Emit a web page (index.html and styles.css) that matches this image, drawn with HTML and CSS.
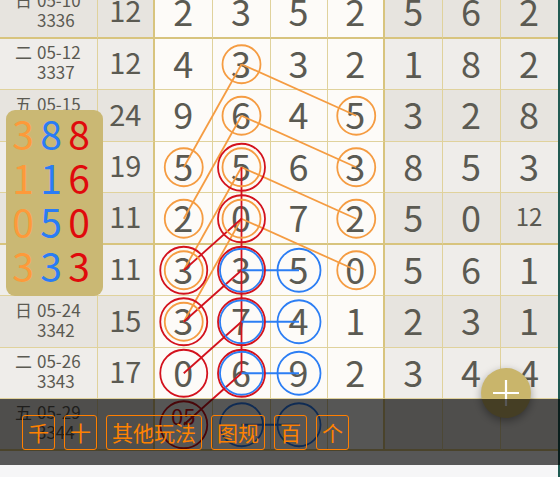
FILE: index.html
```html
<!DOCTYPE html>
<html lang="zh">
<head>
<meta charset="utf-8">
<link rel="stylesheet" href="styles.css">
</head>
<body>
<div class="screen">
  <div class="content">
    <div class="table">
      <div class="row dark thick">
        <div class="cell date"><span class="wd">日</span><span>05-10</span><span class="no">3336</span></div>
        <div class="cell sum">12</div>
        <div class="cell main">2</div><div class="cell main">3</div><div class="cell main">5</div><div class="cell main edge">2</div>
        <div class="cell side">5</div><div class="cell side">6</div><div class="cell side">2</div>
      </div>
      <div class="row light">
        <div class="cell date"><span class="wd">二</span><span>05-12</span><span class="no">3337</span></div>
        <div class="cell sum">12</div>
        <div class="cell main">4</div><div class="cell main">3</div><div class="cell main">3</div><div class="cell main edge">2</div>
        <div class="cell side">1</div><div class="cell side">8</div><div class="cell side">2</div>
      </div>
      <div class="row dark">
        <div class="cell date"><span class="wd">五</span><span>05-15</span><span class="no">3338</span></div>
        <div class="cell sum">24</div>
        <div class="cell main">9</div><div class="cell main">6</div><div class="cell main">4</div><div class="cell main edge">5</div>
        <div class="cell side">3</div><div class="cell side">2</div><div class="cell side">8</div>
      </div>
      <div class="row light">
        <div class="cell date"><span class="wd">日</span><span>05-17</span><span class="no">3339</span></div>
        <div class="cell sum">19</div>
        <div class="cell main">5</div><div class="cell main">5</div><div class="cell main">6</div><div class="cell main edge">3</div>
        <div class="cell side">8</div><div class="cell side">5</div><div class="cell side">3</div>
      </div>
      <div class="row dark thick">
        <div class="cell date"><span class="wd">二</span><span>05-19</span><span class="no">3340</span></div>
        <div class="cell sum">11</div>
        <div class="cell main">2</div><div class="cell main">0</div><div class="cell main">7</div><div class="cell main edge">2</div>
        <div class="cell side">5</div><div class="cell side">0</div><div class="cell side small">12</div>
      </div>
      <div class="row light">
        <div class="cell date"><span class="wd">五</span><span>05-22</span><span class="no">3341</span></div>
        <div class="cell sum">11</div>
        <div class="cell main">3</div><div class="cell main">3</div><div class="cell main">5</div><div class="cell main edge">0</div>
        <div class="cell side">5</div><div class="cell side">6</div><div class="cell side">1</div>
      </div>
      <div class="row dark">
        <div class="cell date"><span class="wd">日</span><span>05-24</span><span class="no">3342</span></div>
        <div class="cell sum">15</div>
        <div class="cell main">3</div><div class="cell main">7</div><div class="cell main">4</div><div class="cell main edge">1</div>
        <div class="cell side">2</div><div class="cell side">3</div><div class="cell side">1</div>
      </div>
      <div class="row light">
        <div class="cell date"><span class="wd">二</span><span>05-26</span><span class="no">3343</span></div>
        <div class="cell sum">17</div>
        <div class="cell main">0</div><div class="cell main">6</div><div class="cell main">9</div><div class="cell main edge">2</div>
        <div class="cell side">3</div><div class="cell side">4</div><div class="cell side">4</div>
      </div>
      <div class="row dark thick">
        <div class="cell date"><span class="wd">五</span><span>05-29</span><span class="no">3344</span></div>
        <div class="cell sum"></div>
        <div class="cell main hit">05</div><div class="cell main"></div><div class="cell main"></div><div class="cell main edge"></div>
        <div class="cell side"></div><div class="cell side"></div><div class="cell side"></div>
      </div>
    </div>
    <div class="blank"></div>
    <div class="footer"></div>
  </div>
  <div class="rim"></div>

  <svg class="marks" width="557" height="477" viewBox="0 0 557 477">
    <g class="ln-orange">
      <line x1="241.5" y1="64.25" x2="356.25" y2="115.75"/>
      <line x1="241.5" y1="64.25" x2="183.75" y2="167.25"/>
      <line x1="241.5" y1="115.75" x2="356.25" y2="167.25"/>
      <line x1="241.5" y1="115.75" x2="183.75" y2="218.75"/>
      <line x1="241.5" y1="167.25" x2="356.25" y2="218.75"/>
      <line x1="241.5" y1="167.25" x2="183.75" y2="270.25"/>
      <line x1="241.5" y1="218.75" x2="356.25" y2="270.25"/>
      <line x1="241.5" y1="218.75" x2="183.75" y2="321.75"/>
    </g>
    <g class="ln-red">
      <line x1="241.5" y1="167.25" x2="241.5" y2="373.25"/>
      <line x1="183.75" y1="270.25" x2="241.5" y2="218.75"/>
      <line x1="183.75" y1="321.75" x2="241.5" y2="270.25"/>
      <line x1="183.75" y1="373.25" x2="241.5" y2="321.75"/>
      <line x1="183.75" y1="424.75" x2="241.5" y2="373.25"/>
    </g>
    <g class="ln-blue">
      <line x1="241.5" y1="270.25" x2="299" y2="270.25"/>
      <line x1="241.5" y1="321.75" x2="299" y2="321.75"/>
      <line x1="241.5" y1="373.25" x2="299" y2="373.25"/>
      <line x1="241.5" y1="424.75" x2="299" y2="424.75"/>
    </g>
    <g class="ring-orange">
      <circle cx="241.5" cy="64.25" r="19"/>
      <circle cx="241.5" cy="115.75" r="19"/>
      <circle cx="356.25" cy="115.75" r="19"/>
      <circle cx="183.75" cy="167.25" r="19"/>
      <circle cx="241.5" cy="167.25" r="19"/>
      <circle cx="356.25" cy="167.25" r="19"/>
      <circle cx="183.75" cy="218.75" r="19"/>
      <circle cx="241.5" cy="218.75" r="19"/>
      <circle cx="356.25" cy="218.75" r="19"/>
      <circle cx="183.75" cy="270.25" r="19"/>
      <circle cx="356.25" cy="270.25" r="19"/>
      <circle cx="183.75" cy="321.75" r="19"/>
    </g>
    <g class="ring-blue">
      <circle cx="241.5" cy="270.25" r="21.5"/>
      <circle cx="299" cy="270.25" r="21.5"/>
      <circle cx="241.5" cy="321.75" r="21.5"/>
      <circle cx="299" cy="321.75" r="21.5"/>
      <circle cx="241.5" cy="373.25" r="21.5"/>
      <circle cx="299" cy="373.25" r="21.5"/>
      <circle cx="241.5" cy="424.75" r="21.5"/>
      <circle cx="299" cy="424.75" r="21.5"/>
    </g>
    <g class="ring-red">
      <circle cx="241.5" cy="167.25" r="23.5"/>
      <circle cx="241.5" cy="218.75" r="23.5"/>
      <circle cx="183.75" cy="270.25" r="23.5"/>
      <circle cx="241.5" cy="270.25" r="23.5"/>
      <circle cx="183.75" cy="321.75" r="23.5"/>
      <circle cx="241.5" cy="321.75" r="23.5"/>
      <circle cx="183.75" cy="373.25" r="23.5"/>
      <circle cx="241.5" cy="373.25" r="23.5"/>
      <circle cx="183.75" cy="424.75" r="23.5"/>
    </g>
  </svg>

  <div class="panel">
    <span class="o">3</span><span class="b">8</span><span class="r">8</span>
    <span class="o">1</span><span class="b">1</span><span class="r">6</span>
    <span class="o">0</span><span class="b">5</span><span class="r">0</span>
    <span class="o">3</span><span class="b">3</span><span class="r">3</span>
  </div>

  <div class="fab">
    <svg width="28" height="28" viewBox="0 0 28 28"><path d="M14 1v26M1 14h26" stroke="#fff" stroke-width="2.2" fill="none"/></svg>
  </div>

  <div class="toolbar">
    <button class="tb">千</button>
    <button class="tb">十</button>
    <button class="tb">其他玩法</button>
    <button class="tb">图规</button>
    <button class="tb">百</button>
    <button class="tb">个</button>
  </div>
</div>
</body>
</html>
```
FILE: styles.css
```css
* { box-sizing: border-box; }
html, body { margin: 0; padding: 0; }
body {
  font-family: "Noto Sans CJK SC", "Noto Sans", sans-serif;
  color: #5b5a52;
  background: #f6f6f7;
}
.screen {
  position: relative;
  width: 560px;
  height: 477px;
  overflow: hidden;
  display: flex;
}
.content {
  width: 557.5px;
  display: flex;
  flex-direction: column;
}
.rim {
  flex: 1;
  background: #1f5a52;
}
.table {
  margin-top: -13px;
}
.row {
  display: grid;
  grid-template-columns: 97.5px 57.5px 57.5px 58px 57px 57.5px 57.5px 58px 57px;
  height: 51.5px;
}
.cell {
  border-bottom: 1px solid #e0d29c;
  border-right: 1px solid #e0d29c;
  display: flex;
  align-items: center;
  justify-content: center;
  line-height: 1;
  padding-bottom: 4px;
}
.row.thick .cell { border-bottom: 2px solid #d8c47e; }
.row.dark .date, .row.dark .sum, .row.dark .side { background: #e7e4df; }
.row.light .date, .row.light .sum, .row.light .side { background: #efedea; }
.cell.side:last-child { border-right: none; }
.sum { border-right: 2px solid #d8c47e; font-size: 29px; }
.main { background: #fdfbf8; font-size: 36px; }
.main.edge { border-right: 2px solid #d8c47e; }
.side { font-size: 36px; }
.side.small { font-size: 24px; }
.hit { color: #d10f18; font-size: 22px; padding-bottom: 18px; }
.date {
  display: grid;
  grid-template-columns: auto auto;
  justify-content: start;
  align-content: center;
  column-gap: 5px;
  padding: 0 0 3px 15px;
  font-size: 17px;
  line-height: 20px;
}
.date .no { grid-column: 2; }
.blank { flex: 1; background: #fff; }
.footer { height: 12px; background: #f6f6f7; }

.marks {
  position: absolute;
  left: 0;
  top: 0;
  fill: none;
  stroke-width: 1.8;
}
.ln-orange line, .ring-orange circle { stroke: #f59c42; }
.ln-red line, .ring-red circle { stroke: #d3121d; }
.ln-blue line, .ring-blue circle { stroke: #2c7ef4; }

.panel {
  position: absolute;
  left: 6px;
  top: 110px;
  width: 97px;
  height: 186px;
  background: #cab874;
  border-radius: 9px;
  display: grid;
  grid-template-columns: repeat(3, 28px);
  grid-auto-rows: 44px;
  padding: 1px 0 0 3px;
  font-size: 39px;
  line-height: 44px;
  text-align: center;
}
.panel .o { color: #fd9a3a; }
.panel .b { color: #2a7cf6; }
.panel .r { color: #e00a0c; }

.fab {
  position: absolute;
  left: 481px;
  top: 368px;
  width: 50px;
  height: 50px;
  border-radius: 50%;
  background: #c9b56b;
  box-shadow: 0 3px 9px rgba(0, 0, 0, 0.35);
  display: flex;
  align-items: center;
  justify-content: center;
}

.toolbar {
  position: absolute;
  left: 0;
  right: 0;
  top: 399px;
  height: 66px;
  background: rgba(0, 0, 0, 0.66);
  display: flex;
  align-items: center;
  gap: 9px;
  padding-left: 22px;
}
.tb {
  height: 35px;
  padding: 0 5px;
  border: 1px solid #ff7f00;
  border-radius: 3px;
  background: transparent;
  color: #ff8200;
  font-family: "Noto Sans CJK SC", sans-serif;
  font-size: 21px;
  line-height: 1;
}
```
